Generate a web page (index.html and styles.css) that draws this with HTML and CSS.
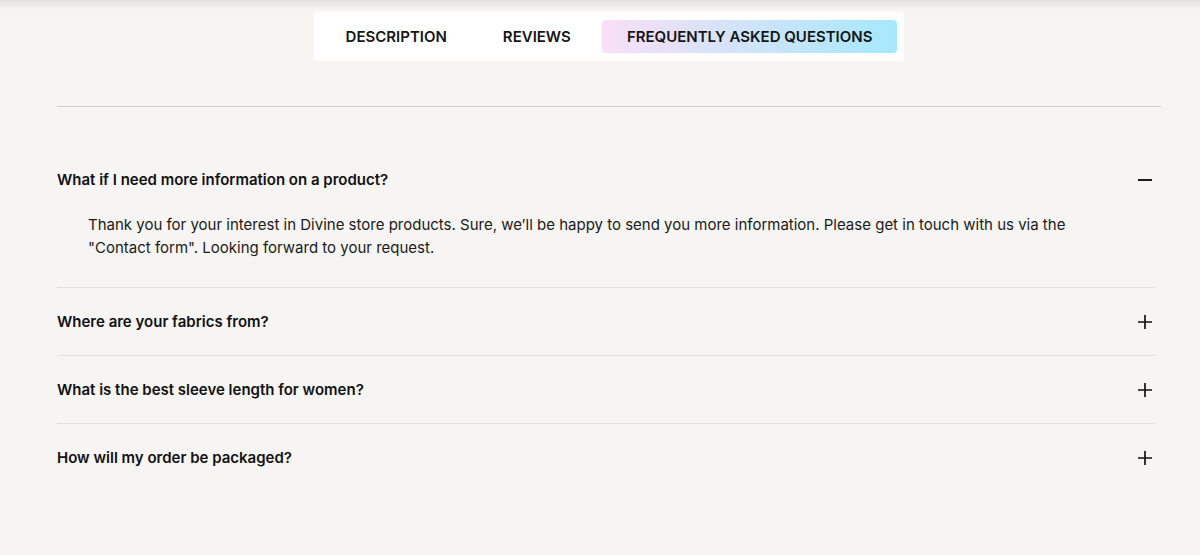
FILE: index.html
```html
<!DOCTYPE html>
<html lang="en">
<head>
<meta charset="utf-8">
<title>FAQ</title>
<link rel="stylesheet" href="styles.css">
</head>
<body>
<div class="page">
  <div class="tabs-wrap">
    <nav class="tabs">
      <span class="tab">DESCRIPTION</span>
      <span class="tab">REVIEWS</span>
      <span class="tab active">FREQUENTLY ASKED QUESTIONS</span>
    </nav>
  </div>
  <hr class="divider">
  <div class="faq">
    <div class="item open">
      <div class="q">
        <span>What if I need more information on a product?</span>
        <svg class="icon" width="16" height="16" viewBox="0 0 16 16"><path d="M1 8h14" stroke="#111" stroke-width="1.9" fill="none"/></svg>
      </div>
      <p class="a">Thank you for your interest in Divine store products. Sure, we’ll be happy to send you more information. Please get in touch with us via the "Contact form". Looking forward to your request.</p>
    </div>
    <div class="item">
      <div class="q">
        <span>Where are your fabrics from?</span>
        <svg class="icon" width="16" height="16" viewBox="0 0 16 16"><path d="M1 8h14M8 1v14" stroke="#111" stroke-width="1.7" fill="none"/></svg>
      </div>
    </div>
    <div class="item">
      <div class="q">
        <span>What is the best sleeve length for women?</span>
        <svg class="icon" width="16" height="16" viewBox="0 0 16 16"><path d="M1 8h14M8 1v14" stroke="#111" stroke-width="1.7" fill="none"/></svg>
      </div>
    </div>
    <div class="item">
      <div class="q">
        <span>How will my order be packaged?</span>
        <svg class="icon" width="16" height="16" viewBox="0 0 16 16"><path d="M1 8h14M8 1v14" stroke="#111" stroke-width="1.7" fill="none"/></svg>
      </div>
    </div>
  </div>
</div>
</body>
</html>
```

FILE: styles.css
```css
html, body {
  margin: 0;
  padding: 0;
}
body {
  background: linear-gradient(#e3e2e0 0, #f6f5f3 10px) no-repeat, #f6f5f3;
  font-family: Inter, "Noto Sans", sans-serif;
  color: #111;
  height: 555px;
  overflow: hidden;
}
.page {
  margin-left: 57px;
  width: 1104px;
  padding-top: 12px;
}
.tabs-wrap {
  display: flex;
  justify-content: center;
}
.tabs {
  display: flex;
  gap: 6px;
  background: #fff;
  border-radius: 4px;
  padding: 8px 7px;
}
.tab {
  display: block;
  padding: 0 25px;
  height: 33px;
  line-height: 33px;
  font-size: 15px;
  font-weight: 600;
  color: #151515;
  border-radius: 4px;
}
.tab.active {
  background: linear-gradient(90deg, #f9dff7 0%, #a5e8fd 100%);
}
.divider {
  border: 0;
  height: 1px;
  background: #cfcecc;
  margin: 45px 0 39px 0;
}
.faq {
  width: 1097px;
}
.item {
  border-top: 1px solid #dfdedc;
}
.item:first-child {
  border-top: 0;
}
.q {
  display: flex;
  justify-content: space-between;
  align-items: center;
  padding: 24px 1px 23px 0;
  height: 20px;
  font-size: 15px;
  font-weight: 600;
  line-height: 20px;
}
.icon {
  display: block;
}
.a {
  margin: 0;
  padding: 0 60px 28px 31px;
  font-size: 15px;
  line-height: 23px;
  color: #1a1a1a;
}
```
